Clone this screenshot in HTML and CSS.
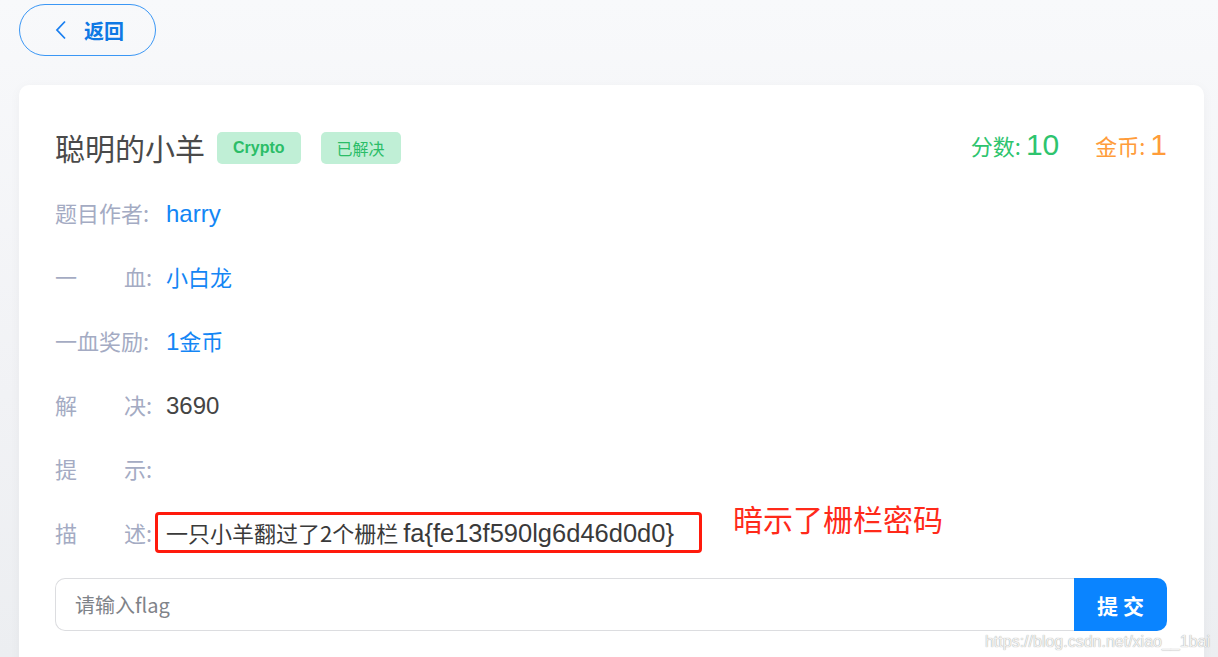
FILE: index.html
```html
<!DOCTYPE html>
<html lang="zh-CN">
<head>
    <meta charset="UTF-8">
    <meta name="viewport" content="width=device-width, initial-scale=1.0">
    <title>聪明的小羊</title>
    <link rel="stylesheet" href="styles.css">
</head>
<body>
    <div class="page">
        <div class="topbar">
            <button class="back-btn">
                <svg class="back-icon" width="12" height="20" viewBox="0 0 12 20">
                    <path d="M10 1.5 L2 10 L10 18.5" fill="none" stroke="#1a7ff0" stroke-width="1.8"/>
                </svg>
                <span>返回</span>
            </button>
        </div>

        <div class="card">
            <div class="title-row">
                <h2 class="title">聪明的小羊</h2>
                <span class="tag">Crypto</span>
                <span class="tag tag-solved">已解决</span>
                <div class="stats">
                    <span class="score">分数: <b>10</b></span>
                    <span class="coin">金币: <b>1</b></span>
                </div>
            </div>

            <div class="info-row">
                <div class="label"><span>题目作者:</span></div>
                <div class="value link"><span class="latin">harry</span></div>
            </div>
            <div class="info-row">
                <div class="label"><span>一</span><span>血:</span></div>
                <div class="value link">小白龙</div>
            </div>
            <div class="info-row">
                <div class="label"><span>一血奖励:</span></div>
                <div class="value link"><span class="latin">1</span>金币</div>
            </div>
            <div class="info-row">
                <div class="label"><span>解</span><span>决:</span></div>
                <div class="value"><span class="latin">3690</span></div>
            </div>
            <div class="info-row">
                <div class="label"><span>提</span><span>示:</span></div>
                <div class="value"></div>
            </div>
            <div class="info-row">
                <div class="label"><span>描</span><span>述:</span></div>
                <div class="value marked">一只小羊翻过了2个栅栏 <span class="latin">fa{fe13f590lg6d46d0d0}</span></div>
                <div class="note">暗示了栅栏密码</div>
            </div>

            <div class="flag-form">
                <input type="text" class="flag-input" placeholder="请输入flag">
                <button class="submit-btn">提 交</button>
            </div>
        </div>
    </div>
    <div class="watermark">https://blog.csdn.net/xiao__1bai</div>
</body>
</html>
```

FILE: styles.css
```css
html, body {
    margin: 0;
    height: 100%;
    overflow: hidden;
}
body {
    font-family: "Liberation Sans", "Noto Sans CJK SC", sans-serif;
    background: linear-gradient(180deg, #f8f9fb 0%, #f1f2f5 60%, #eceef1 100%);
    color: #333;
}
.page {
    padding: 4px 14px 0 19px;
}
.topbar {
    display: flex;
}
.back-btn {
    display: flex;
    align-items: center;
    gap: 17px;
    width: 137px;
    height: 52px;
    padding: 0 0 0 35px;
    background: transparent;
    border: 1px solid #3b97f5;
    border-radius: 26px;
    color: #0f79e4;
    font-family: "Noto Sans CJK SC", sans-serif;
    font-size: 20px;
    font-weight: bold;
    cursor: pointer;
}
.back-icon {
    display: block;
}
.card {
    margin-top: 29px;
    background: #fff;
    border-radius: 10px;
    box-shadow: 0 2px 12px rgba(0, 0, 0, 0.04);
    padding: 30px 37px 40px 36px;
    height: 600px;
}
.title-row {
    display: flex;
    align-items: center;
    height: 66px;
}
.title {
    margin: -3px 12px 0 0;
    font-family: "Noto Sans CJK SC", sans-serif;
    font-size: 30px;
    font-weight: normal;
    color: #4a4a4a;
}
.tag {
    display: inline-block;
    height: 32px;
    line-height: 32px;
    padding: 0 16px;
    margin-right: 20px;
    background: #c0efd6;
    border-radius: 5px;
    color: #2bbd68;
    font-size: 16px;
    font-weight: bold;
}
.tag-solved {
    font-family: "Noto Sans CJK SC", sans-serif;
    font-weight: normal;
    padding: 0 16px;
}
.stats {
    margin-left: auto;
    margin-top: -6px;
    display: flex;
    align-items: baseline;
    gap: 36px;
    font-family: "Noto Sans CJK SC", sans-serif;
    font-size: 22px;
}
.stats b {
    font-family: "Liberation Sans", sans-serif;
    font-weight: normal;
    font-size: 30px;
}
.score {
    color: #2ec46e;
}
.coin {
    color: #ff9c3a;
}
.info-row {
    display: flex;
    align-items: center;
    height: 64px;
    margin-top: -1px;
    margin-bottom: 1px;
    font-size: 22px;
}
.label {
    display: flex;
    justify-content: space-between;
    width: 97px;
    margin-right: 14px;
    color: #a4abc3;
    font-family: "Noto Sans CJK SC", sans-serif;
    white-space: nowrap;
}
.value {
    color: #444;
    font-family: "Noto Sans CJK SC", sans-serif;
}
.latin {
    font-family: "Liberation Sans", sans-serif;
    font-size: 24px;
}
.link {
    color: #1486f5;
}
.marked {
    margin-left: -11px;
    padding: 3px 25px 3px 8px;
    border: 3px solid #ff1a0c;
    border-radius: 4px;
    color: #3a3a3a;
    line-height: 28px;
}
.marked .latin {
    font-size: 25.5px;
}
.note {
    align-self: flex-start;
    margin: -4px 0 0 31px;
    color: #ff2a1a;
    font-family: "Noto Sans CJK SC", sans-serif;
    font-size: 30px;
}
.flag-form {
    display: flex;
    margin-top: 14px;
    height: 53px;
}
.flag-input {
    flex: 1;
    box-sizing: border-box;
    height: 53px;
    padding: 0 19px;
    border: 1px solid #dcdde0;
    border-right: none;
    border-radius: 10px 0 0 10px;
    font-family: "Noto Sans CJK SC", sans-serif;
    font-size: 20px;
    outline: none;
}
.flag-input::placeholder {
    color: #7f8389;
}
.submit-btn {
    width: 93px;
    height: 53px;
    border: none;
    border-radius: 0 10px 10px 0;
    background: #0a84ff;
    color: #fff;
    font-family: "Noto Sans CJK SC", sans-serif;
    font-size: 21px;
    font-weight: bold;
    cursor: pointer;
}
.watermark {
    position: absolute;
    right: 8px;
    bottom: 6px;
    color: #f2f2f2;
    font-size: 16px;
    text-shadow: 0 0 1px #8a8a8a;
}
```
